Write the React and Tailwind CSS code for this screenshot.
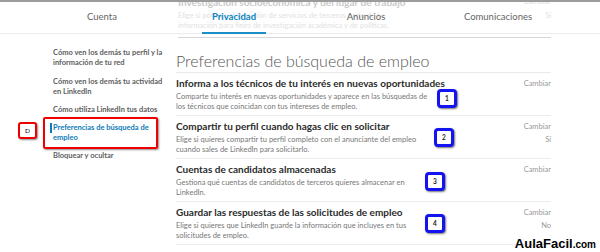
import React from "react";

const tabs = ["Cuenta", "Privacidad", "Anuncios", "Comunicaciones"];

const sideLinks = [
  ["Cómo ven los demás tu perfil y la", "información de tu red"],
  ["Cómo ven los demás tu actividad", "en LinkedIn"],
  ["Cómo utiliza LinkedIn tus datos"],
  ["Preferencias de búsqueda de", "empleo"],
  ["Bloquear y ocultar"],
];

const settings = [
  {
    title: "Informa a los técnicos de tu interés en nuevas oportunidades",
    desc: ["Comparte tu interés en nuevas oportunidades y aparece en las búsquedas de", "los técnicos que coincidan con tus intereses de empleo."],
    value: "",
    badge: { n: 1, pos: "left-[261px] top-[16px]" },
  },
  {
    title: "Compartir tu perfil cuando hagas clic en solicitar",
    desc: ["Elige si quieres compartir tu perfil completo con el anunciante del empleo", "cuando sales de LinkedIn para solicitarlo."],
    value: "Sí",
    badge: { n: 2, pos: "left-[258px] top-[12px]" },
  },
  {
    title: "Cuentas de candidatos almacenadas",
    desc: ["Gestiona qué cuentas de candidatos de terceros quieres almacenar en", "LinkedIn."],
    value: "",
    badge: { n: 3, pos: "left-[249px] top-[13px]" },
  },
  {
    title: "Guardar las respuestas de las solicitudes de empleo",
    desc: ["Elige si quieres que LinkedIn guarde la información que incluyes en tus", "solicitudes de empleo."],
    value: "No",
    badge: { n: 4, pos: "left-[249px] top-[12px]" },
  },
];

function Badge({ n, pos }) {
  return (
    <div
      className={`absolute ${pos} w-[20px] h-[19px] rounded-[4px] border-[3px] border-[#1414f0] bg-white flex items-center justify-center text-[6.5px] font-bold text-[#222] shadow-[1px_1px_2px_rgba(0,0,0,0.55)]`}
    >
      {n}
    </div>
  );
}

export default function App() {
  return (
    <div
      className="relative w-[600px] h-[252px] overflow-hidden bg-white border-t-2 border-[#9c9c9c]"
      style={{ fontFamily: "Lato, 'Liberation Sans', sans-serif" }}
    >
      {/* Tab bar, with the page content scrolled up underneath it */}
      <div className="relative h-[36px]">
        <div className="absolute left-[178px] top-[-6px] w-[373px]">
          <div className="flex justify-between text-[10px] font-bold text-[#cacaca] leading-[12px]">
            <span>Investigación socioeconómica y del lugar de trabajo</span>
            <span className="text-[7.5px] font-normal text-[#dcdcdc]">Cambiar</span>
          </div>
          <div className="flex justify-between mt-[3px] text-[7.5px] text-[#e2e2e2] leading-[10px]">
            <div>
              <div>Elige si pones a disposición de servicios de terceros parte de tu</div>
              <div>información para fines de investigación académica y de políticas.</div>
            </div>
            <span className="text-[7.5px] text-[#e2e2e2]">Sí</span>
          </div>
          <div className="mt-[6px] border-b border-[#d6d6d6]" />
        </div>
        <div className="relative h-[32px] border-b border-[#ececec]">
          <div className="grid grid-cols-4 w-[528px] ml-[36px] h-full">
            {tabs.map((t) => (
              <div
                key={t}
                className={`relative flex items-center justify-center text-[9.5px] ${
                  t === "Privacidad" ? "text-[#0a85c2] font-bold" : "text-[#666]"
                }`}
              >
                {t}
                {t === "Privacidad" && (
                  <span className="absolute left-[34px] w-[64px] bottom-[-1px] h-[2px] bg-[#1a8cc6]" />
                )}
              </div>
            ))}
          </div>
        </div>
      </div>

      <div className="flex">
        {/* Sidebar */}
        <nav className="relative w-[176px] pl-[53px] pt-[10px] flex flex-col gap-[8px] text-[7.5px] leading-[10px] font-bold text-[#5e5e5e] whitespace-nowrap">
          {sideLinks.map((lines, i) => (
            <div key={i} className={`relative ${i === 0 ? "mb-[1px]" : ""} ${i === 3 ? "text-[#0a7bb8]" : ""}`}>
              {lines.map((l) => (
                <div key={l}>{l}</div>
              ))}
              {i === 3 && (
                <>
                  <span className="absolute left-[-3.5px] top-[0px] w-[2px] h-[10px] bg-[#0a7bb8]" />
                  <span className="absolute left-[-10px] top-[-6px] w-[115px] h-[32px] rounded-[2px] border-[2.5px] border-[#e00] shadow-[1px_1px_2px_rgba(0,0,0,0.45)]" />
                  <span className="absolute left-[-35px] top-[-1px] w-[19px] h-[17px] rounded-[3px] border-[2.5px] border-[#e00] bg-white flex items-center justify-center text-[6.5px] font-normal text-black shadow-[1px_1px_2px_rgba(0,0,0,0.45)]">
                    D
                  </span>
                </>
              )}
            </div>
          ))}
        </nav>

        {/* Main */}
        <main className="w-[375px]">
          <h1 className="h-[35px] pt-[14px] border-b border-[#e9e9e9] text-[16px] leading-[18px] font-light text-[#555]">
            Preferencias de búsqueda de empleo
          </h1>
          {settings.map((s) => (
            <div key={s.title} className="relative flex justify-between pt-[4px] pb-[3px] border-b border-[#ececec]">
              <div>
                <div className="text-[10px] leading-[12px] font-bold text-[#2b2b2b]">{s.title}</div>
                <div className="mt-[3px] text-[7.5px] leading-[10px] text-[#777]">
                  {s.desc.map((d) => (
                    <div key={d}>{d}</div>
                  ))}
                </div>
              </div>
              <div className="text-right text-[7.5px] leading-[10px] text-[#9a9a9a] pt-[2px]">
                <div>Cambiar</div>
                <div className="mt-[3px]">{s.value}</div>
              </div>
              <Badge {...s.badge} />
            </div>
          ))}
        </main>
      </div>

      <div className="absolute right-[4px] bottom-[1px] flex items-baseline text-black font-bold" style={{ fontFamily: "'Liberation Sans', sans-serif" }}>
        <span className="text-[13px] leading-[13px]">AulaFacil</span>
        <span className="text-[10px] leading-[13px]">.com</span>
      </div>
    </div>
  );
}
